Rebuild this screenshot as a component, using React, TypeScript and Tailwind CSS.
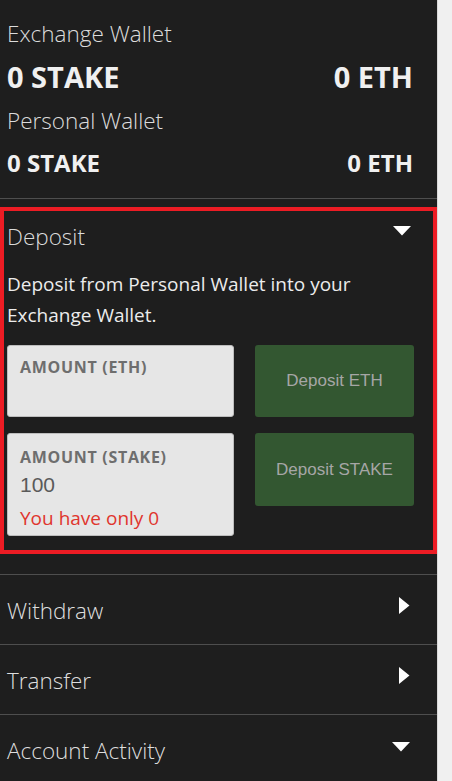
import React from "react";

const DownArrow = ({ className = "" }: { className?: string }) => (
  <svg width="18" height="10" viewBox="0 0 18 10" className={className}>
    <polygon points="0,0 18,0 9,9.5" fill="#ffffff" />
  </svg>
);

const RightArrow = ({ className = "" }: { className?: string }) => (
  <svg width="11" height="17" viewBox="0 0 11 17" className={className}>
    <polygon points="0,0 10.5,8.5 0,17" fill="#ffffff" />
  </svg>
);

const Section = ({ title, open }: { title: string; open?: boolean }) => (
  <div className="flex h-[70px] border-t border-[#4e4e4e] pl-[7px] pr-[27px]">
    <div className="flex-1 pt-[18px] text-[22.5px] font-light leading-[36px] text-[#dedede]">
      {title}
    </div>
    {open ? (
      <DownArrow className="mt-[27px]" />
    ) : (
      <RightArrow className="mt-[22px]" />
    )}
  </div>
);

export default function App() {
  return (
    <div
      className="flex min-h-screen w-full"
      style={{ fontFamily: '"Open Sans", "Noto Sans", sans-serif' }}
    >
      <div className="flex w-[437px] shrink-0 flex-col bg-[#1e1e1e]">
        {/* wallets */}
        <div className="border-b border-[#4e4e4e] pb-[11px] pl-[7px] pr-[24px] pt-[17px]">
          <div className="text-[22.5px] font-light leading-[34px] text-[#dcdcdc]">
            Exchange Wallet
          </div>
          <div className="flex justify-between text-[29px] font-bold leading-[52px] text-[#f0f0f0]">
            <span>0 STAKE</span>
            <span>0 ETH</span>
          </div>
          <div className="text-[22.5px] font-light leading-[36px] text-[#dcdcdc]">
            Personal Wallet
          </div>
          <div className="flex justify-between text-[24px] font-bold leading-[48px] text-[#f0f0f0]">
            <span>0 STAKE</span>
            <span>0 ETH</span>
          </div>
        </div>

        {/* deposit */}
        <div className="mt-[8px] border-4 border-[#ec1c24] pb-[14px] pl-[3px] pr-[18px]">
          <div className="flex h-[52px] justify-between">
            <div className="text-[22.5px] font-light leading-[52px] text-[#dcdcdc]">
              Deposit
            </div>
            <DownArrow className="mr-[4px] mt-[15px]" />
          </div>
          <p className="mt-[6px] text-[19px] leading-[31px] text-[#ececec]">
            Deposit from Personal Wallet into your Exchange Wallet.
          </p>

          <div className="mt-[14px] flex items-start gap-[21px]">
            <div className="h-[72px] w-[227px] rounded-[3px] border border-[#bdbdbd] bg-[#e6e6e6] px-[12px] pt-[10px]">
              <div className="text-[16px] font-bold leading-[22px] tracking-[0.7px] text-[#6e6e6e]">
                AMOUNT (ETH)
              </div>
            </div>
            <button
              className="h-[72px] w-[159px] rounded-[3px] bg-[#335731] text-[17px] text-[#a6a6a6]"
              style={{ fontFamily: '"Liberation Sans", Arial, sans-serif' }}
            >
              Deposit ETH
            </button>
          </div>

          <div className="mt-[16px] flex items-start gap-[21px]">
            <div className="h-[103px] w-[227px] rounded-[3px] border border-[#bdbdbd] bg-[#e6e6e6] px-[12px] pt-[12px]">
              <div className="text-[16px] font-bold leading-[22px] tracking-[0.7px] text-[#6e6e6e]">
                AMOUNT (STAKE)
              </div>
              <div
                className="mt-[2px] text-[21px] leading-[30px] text-[#5a5a5a]"
                style={{ fontFamily: '"Liberation Sans", Arial, sans-serif' }}
              >
                100
              </div>
              <div className="mt-[5px] text-[19px] leading-[26px] text-[#e0352d]">
                You have only 0
              </div>
            </div>
            <button
              className="h-[73px] w-[159px] rounded-[3px] bg-[#335731] text-[17px] text-[#a6a6a6]"
              style={{ fontFamily: '"Liberation Sans", Arial, sans-serif' }}
            >
              Deposit STAKE
            </button>
          </div>
        </div>

        <div className="mt-[20px]">
          <Section title="Withdraw" />
          <Section title="Transfer" />
          <Section title="Account Activity" open />
        </div>
      </div>
      <div className="flex-1 border-l border-[#d9d9d9] bg-[#f0f0f0]" />
    </div>
  );
}
